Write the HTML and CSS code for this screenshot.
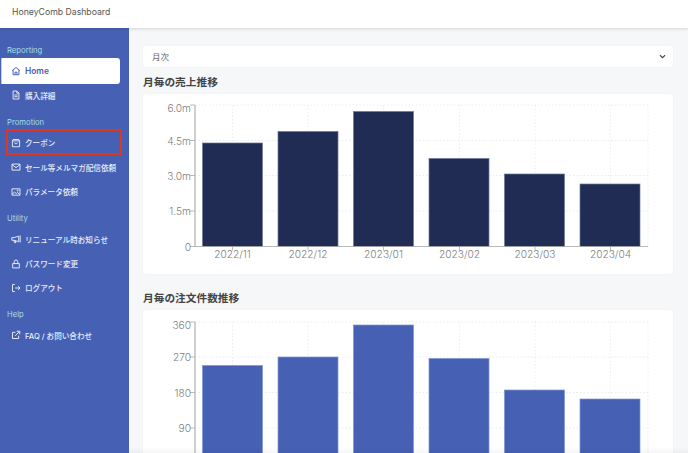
FILE: index.html
```html
<!DOCTYPE html>
<html lang="ja">
<head>
    <meta charset="UTF-8">
    <title>HoneyComb Dashboard</title>
    <link rel="stylesheet" href="styles.css">
</head>
<body>
    <header class="topbar">HoneyComb Dashboard</header>

    <div class="layout">
        <nav class="sidebar">
            <div class="nav-label">Reporting</div>
            <a class="nav-item active">
                <svg class="nav-icon" viewBox="0 0 12 12"><path d="M1.5 5.500 6 1.800l4.500 3.700M2.500 4.800v5.700h7V4.800M4.800 10.500V7.500h2.400v3"/></svg>
                <span class="home-text">Home</span>
            </a>
            <a class="nav-item">
                <svg class="nav-icon" viewBox="0 0 12 12"><path d="M2.500 1.200h4.500l2.500 2.600v7h-7zM7 1.200v2.600h2.500M4 6h4M4 8h4"/></svg>
                <span>購入詳細</span>
            </a>

            <div class="nav-label">Promotion</div>
            <a class="nav-item marked">
                <svg class="nav-icon" viewBox="0 0 12 12"><path d="M2.500 1.800h7l.8 1.700v7H1.700v-7zM1.700 3.500h8.600M4.200 5.500c.3 2 3.300 2 3.600 0"/></svg>
                <span>クーポン</span>
            </a>
            <a class="nav-item">
                <svg class="nav-icon" viewBox="0 0 12 12"><path d="M1.200 2.500h9.600v7.200H1.200zM1.200 3.200 6 6.800l4.800-3.600"/></svg>
                <span>セール等メルマガ配信依頼</span>
            </a>
            <a class="nav-item">
                <svg class="nav-icon" viewBox="0 0 12 12"><path d="M1.200 2.200h9.600v7.600H1.200zM1.500 8.500l2.800-2.300 2 1.600 1.500-1.100 2.700 2"/><circle cx="8" cy="4.400" r=".6"/></svg>
                <span>パラメータ依頼</span>
            </a>

            <div class="nav-label">Utility</div>
            <a class="nav-item">
                <svg class="nav-icon" viewBox="0 0 12 12"><path d="M11 1.800v8.400M9.300 2.600 3.800 4.300H1v3.200h2.800l5.500 1.800zM3.500 7.600l.8 2.800h1.500l-.6-2.300"/></svg>
                <span>リニューアル時お知らせ</span>
            </a>
            <a class="nav-item">
                <svg class="nav-icon" viewBox="0 0 12 12"><path d="M2 5.500h8v5.200H2zM3.800 5.500V3.400a2.200 2.200 0 0 1 4.400 0v2.100"/></svg>
                <span>パスワード変更</span>
            </a>
            <a class="nav-item">
                <svg class="nav-icon" viewBox="0 0 12 12"><path d="M4.500 1.800H1.800v8.400h2.700M5 6h5.800M8.600 3.900 10.800 6 8.600 8.100"/></svg>
                <span>ログアウト</span>
            </a>

            <div class="nav-label">Help</div>
            <a class="nav-item">
                <svg class="nav-icon" viewBox="0 0 12 12"><path d="M5.200 2.800H1.800v7.400h7.400V6.800M6.800 1.500h3.700v3.700M10.300 1.700 5 7"/></svg>
                <span>FAQ / お問い合わせ</span>
            </a>
        </nav>

        <main class="content">
            <div class="period-select">
                <span>月次</span>
                <svg class="chevron" viewBox="0 0 8 6"><path d="M1 1.500 4 4.500l3-3"/></svg>
            </div>

            <h2 class="chart-title">月毎の売上推移</h2>
            <section class="chart-card">
                <svg class="chart" viewBox="0 0 530 180">
                    <path class="grid" d="M52 11H505M52 46.500H505M52 81.500H505M52 117H505M89.500 11V152M165 11V152M240.500 11V152M316.500 11V152M392 11V152M467.500 11V152M505 11V152"/>
                    <g class="bars-dark">
                        <rect x="59.500" y="49" width="60" height="103.500"/>
                        <rect x="135" y="37.500" width="60" height="115"/>
                        <rect x="210.500" y="17.500" width="60" height="135"/>
                        <rect x="286" y="64.500" width="60" height="88"/>
                        <rect x="361.500" y="80" width="60" height="72.500"/>
                        <rect x="437" y="90" width="60" height="62.500"/>
                    </g>
                    <path class="axis-y" d="M52 11V152.500"/>
                    <path class="axis-x" d="M47 152.500H505M47 11h5M47 46.500h5M47 81.500h5M47 117h5M89.500 152.500v4M165 152.500v4M240.500 152.500v4M316.500 152.500v4M392 152.500v4M467.500 152.500v4"/>
                    <g class="tick-y">
                        <text x="48" y="18">6.0m</text>
                        <text x="48" y="50.500">4.5m</text>
                        <text x="48" y="85.500">3.0m</text>
                        <text x="48" y="121">1.5m</text>
                        <text x="48" y="156.500">0</text>
                    </g>
                    <g class="tick-x">
                        <text x="89.500" y="163.500">2022/11</text>
                        <text x="165" y="163.500">2022/12</text>
                        <text x="240.500" y="163.500">2023/01</text>
                        <text x="316.500" y="163.500">2023/02</text>
                        <text x="392" y="163.500">2023/03</text>
                        <text x="467.500" y="163.500">2023/04</text>
                    </g>
                </svg>
            </section>

            <h2 class="chart-title second">月毎の注文件数推移</h2>
            <section class="chart-card">
                <svg class="chart" viewBox="0 0 530 180">
                    <path class="grid" d="M52 12H505M52 47H505M52 82.500H505M52 118H505M89.500 12V153M165 12V153M240.500 12V153M316.500 12V153M392 12V153M467.500 12V153M505 12V153"/>
                    <g class="bars-blue">
                        <rect x="59.500" y="55.500" width="60" height="98"/>
                        <rect x="135" y="47" width="60" height="106.500"/>
                        <rect x="210.500" y="15" width="60" height="138.500"/>
                        <rect x="286" y="48.500" width="60" height="105"/>
                        <rect x="361.500" y="80" width="60" height="73.500"/>
                        <rect x="437" y="89" width="60" height="64.500"/>
                    </g>
                    <path class="axis-y" d="M52 12V153.500"/>
                    <path class="axis-x" d="M47 12h5M47 47h5M47 82.500h5M47 118h5"/>
                    <g class="tick-y">
                        <text x="48" y="19">360</text>
                        <text x="48" y="51">270</text>
                        <text x="48" y="86.500">180</text>
                        <text x="48" y="122">90</text>
                    </g>
                </svg>
            </section>
        </main>
    </div>
</body>
</html>
```

FILE: styles.css
```css
* {
    box-sizing: border-box;
}

html, body {
    height: 100%;
}

body {
    margin: 0;
    display: flex;
    flex-direction: column;
    overflow: hidden;
    background-color: #f6f7f9;
    font-family: Inter, "Noto Sans CJK JP", sans-serif;
    color: #444;
}

.topbar {
    position: relative;
    z-index: 1;
    flex: none;
    height: 28px;
    padding: 7px 12px 0;
    font-size: 8.700px;
    line-height: 11px;
    color: #555;
    background-color: #fff;
    box-shadow: 0 1px 3px rgba(0, 0, 0, 0.14);
}

.layout {
    flex: 1;
    display: flex;
    min-height: 0;
}

/* サイドバー */
.sidebar {
    flex: none;
    width: 128.500px;
    padding-top: 15px;
    background-color: #4660b4;
}

.nav-label {
    height: 14px;
    margin-top: 7.300px;
    margin-bottom: 1.800px;
    padding-left: 7px;
    font-size: 7.700px;
    line-height: 15px;
    color: #a4dfe4;
}

.nav-label:first-child {
    margin-top: 0;
}

.nav-item {
    position: relative;
    display: flex;
    align-items: center;
    gap: 4px;
    height: 24.400px;
    padding-left: 11px;
    font-size: 7.600px;
    font-weight: 500;
    color: #e9edf8;
}

.nav-item.active {
    height: 26.400px;
    margin: -1px 9px -1px 1px;
    padding-left: 10px;
    color: #4660b4;
    background-color: #fff;
    border-left: 1px solid #a4dfe4;
    border-radius: 1px 3px 3px 1px;
}

.nav-item.active .nav-icon {
    margin-left: -1px;
}

.home-text {
    font-size: 8.400px;
    font-weight: 600;
}

/* 赤枠の注釈 */
.nav-item.marked::after {
    content: "";
    position: absolute;
    top: -1.800px;
    left: 6px;
    box-sizing: border-box;
    width: 115.500px;
    height: 26px;
    border: 2.300px solid #e2361f;
}

.nav-icon {
    flex: none;
    width: 10px;
    height: 10px;
    fill: none;
    stroke: currentColor;
    stroke-width: 1.150;
}

/* メイン */
.content {
    position: relative;
    flex: 1;
    min-width: 0;
    padding: 18px 15px 0 14.500px;
    overflow: hidden;
}

/* 下端のうすい影 */
.content::after {
    content: "";
    position: absolute;
    left: 0;
    right: 0;
    bottom: 0;
    height: 6px;
    background: linear-gradient(rgba(0, 0, 0, 0), rgba(0, 0, 0, 0.04));
}

.period-select {
    display: flex;
    align-items: center;
    justify-content: space-between;
    height: 20.500px;
    padding: 0 7px 0 9px;
    font-size: 8.500px;
    color: #666;
    background-color: #fff;
    border-radius: 2px;
    box-shadow: 0 0 1px rgba(0, 0, 0, 0.12);
}

.chevron {
    width: 7px;
    height: 5px;
    fill: none;
    stroke: #444;
    stroke-width: 1.300;
}

.chart-title {
    margin: 9.500px 0 5px;
    height: 13px;
    font-size: 10.700px;
    font-weight: 700;
    line-height: 13px;
    color: #444;
}

.chart-title.second {
    margin-top: 17.500px;
}

.chart-card {
    flex: none;
    height: 180px;
    background-color: #fff;
    border-radius: 3px;
    box-shadow: 0 0 1px rgba(0, 0, 0, 0.12);
}

.chart {
    display: block;
    width: 530px;
    height: 180px;
}

.grid {
    fill: none;
    stroke: #ebecee;
    stroke-width: 1;
    stroke-dasharray: 1.500 2;
}

.bars-dark rect {
    fill: #202c54;
    stroke: #6d7898;
    stroke-width: 0.700;
}

.bars-blue rect {
    fill: #4660b4;
    stroke: #8194d4;
    stroke-width: 0.700;
}

.axis-y {
    fill: none;
    stroke: #c4c4c4;
    stroke-width: 1.600;
}

.axis-x {
    fill: none;
    stroke: #a8a8a8;
    stroke-width: 0.800;
}

.tick-y text,
.tick-x text {
    font-size: 10.200px;
    font-weight: 300;
    fill: #808080;
}

.tick-y text {
    text-anchor: end;
}

.tick-x text {
    text-anchor: middle;
}
```
